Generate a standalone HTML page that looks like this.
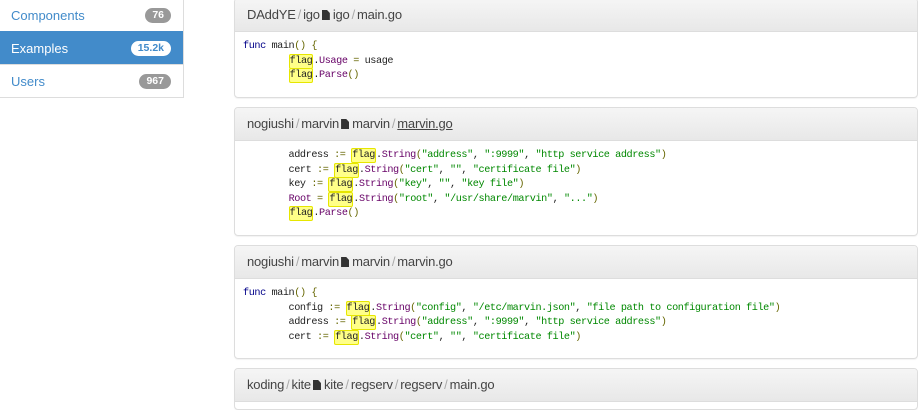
<!DOCTYPE html><html><head><style>
body{margin:0;width:918px;height:401px;overflow:hidden;background:#fff;font-family:"Liberation Sans",sans-serif;position:relative}
.side{position:absolute;left:0;top:-2px;width:183px;border:1px solid #ddd;border-left:none;border-top:none}
.it{height:33px;line-height:33px;padding-left:11px;font-size:13px;color:#428bca;position:relative;border-top:1px solid #ddd;box-sizing:border-box}
.it.act{background:#428bca;color:#fff;border-color:#428bca}
.b{position:absolute;right:12px;top:9px;height:15px;line-height:15px;padding:0 7px;border-radius:8px;background:#999;color:#fff;font-size:10.5px;font-weight:bold}
.act .b{background:#fff;color:#428bca}
.p{position:absolute;left:234px;width:682px;border:1px solid #ddd;border-radius:4px;overflow:hidden;box-shadow:0 1px 1px rgba(0,0,0,.05)}
.h{height:32px;line-height:32px;padding-left:12px;font-size:13px;color:#444;background:linear-gradient(#f5f5f5,#e8e8e8);border-bottom:1px solid #ddd;letter-spacing:-0.2px}
.s{color:#aaa;margin:0 2px}
.f{display:inline-block;width:8px;height:10px;background:#333;margin:0 3px -1px 2px;clip-path:polygon(0 0,65% 0,100% 30%,100% 100%,0 100%)}
pre{margin:0;padding:8px 8px 0;font-family:"Liberation Mono",monospace;font-size:10.2px;letter-spacing:-0.42px;line-height:14.5px;color:#222}
.k{color:#008}.m{color:#606}.g{color:#080}.o{color:#660}
.fl{background:#ffff88;border:1px solid #e6e600;border-radius:2px;padding:1px 0}
</style></head><body>
<div class="side">
<div class="it">Components<span class="b">76</span></div>
<div class="it act">Examples<span class="b">15.2k</span></div>
<div class="it">Users<span class="b">967</span></div>
</div>
<div class="p" style="top:-2px;height:98px"><div class="h">DAddYE<span class="s">/</span>igo<span class="f"></span>igo<span class="s">/</span>main.go</div>
<pre><span class="k">func</span> main<span class="o">()</span> <span class="o">{</span>
        <span class="fl">flag</span>.<span class="m">Usage</span> <span class="o">=</span> usage
        <span class="fl">flag</span>.<span class="m">Parse</span><span class="o">()</span></pre></div>
<div class="p" style="top:107px;height:127px"><div class="h">nogiushi<span class="s">/</span>marvin<span class="f"></span>marvin<span class="s">/</span><u>marvin.go</u></div>
<pre>
        address <span class="o">:=</span> <span class="fl">flag</span>.<span class="m">String</span><span class="o">(</span><span class="g">"address"</span>, <span class="g">":9999"</span>, <span class="g">"http service address"</span><span class="o">)</span>
        cert <span class="o">:=</span> <span class="fl">flag</span>.<span class="m">String</span><span class="o">(</span><span class="g">"cert"</span>, <span class="g">""</span>, <span class="g">"certificate file"</span><span class="o">)</span>
        key <span class="o">:=</span> <span class="fl">flag</span>.<span class="m">String</span><span class="o">(</span><span class="g">"key"</span>, <span class="g">""</span>, <span class="g">"key file"</span><span class="o">)</span>
        <span class="m">Root</span> <span class="o">=</span> <span class="fl">flag</span>.<span class="m">String</span><span class="o">(</span><span class="g">"root"</span>, <span class="g">"/usr/share/marvin"</span>, <span class="g">"..."</span><span class="o">)</span>
        <span class="fl">flag</span>.<span class="m">Parse</span><span class="o">()</span></pre></div>
<div class="p" style="top:245px;height:112px"><div class="h">nogiushi<span class="s">/</span>marvin<span class="f"></span>marvin<span class="s">/</span>marvin.go</div>
<pre><span class="k">func</span> main<span class="o">()</span> <span class="o">{</span>
        config <span class="o">:=</span> <span class="fl">flag</span>.<span class="m">String</span><span class="o">(</span><span class="g">"config"</span>, <span class="g">"/etc/marvin.json"</span>, <span class="g">"file path to configuration file"</span><span class="o">)</span>
        address <span class="o">:=</span> <span class="fl">flag</span>.<span class="m">String</span><span class="o">(</span><span class="g">"address"</span>, <span class="g">":9999"</span>, <span class="g">"http service address"</span><span class="o">)</span>
        cert <span class="o">:=</span> <span class="fl">flag</span>.<span class="m">String</span><span class="o">(</span><span class="g">"cert"</span>, <span class="g">""</span>, <span class="g">"certificate file"</span><span class="o">)</span></pre></div>
<div class="p" style="top:368px;height:40px"><div class="h">koding<span class="s">/</span>kite<span class="f"></span>kite<span class="s">/</span>regserv<span class="s">/</span>regserv<span class="s">/</span>main.go</div></div>
</body></html>
